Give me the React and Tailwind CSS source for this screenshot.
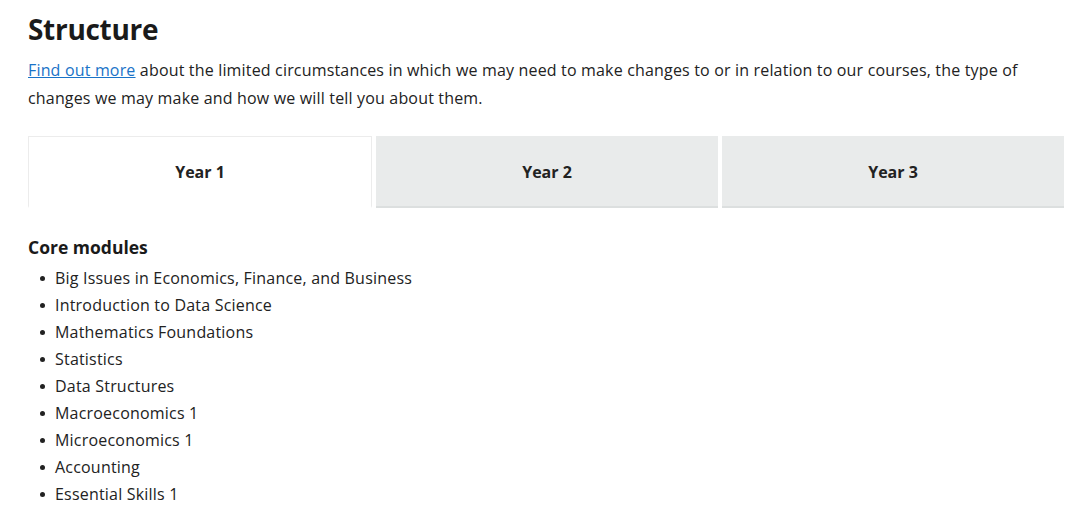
export default function App() {
  const items = [
    "Big Issues in Economics, Finance, and Business",
    "Introduction to Data Science",
    "Mathematics Foundations",
    "Statistics",
    "Data Structures",
    "Macroeconomics 1",
    "Microeconomics 1",
    "Accounting",
    "Essential Skills 1",
  ];
  return (
    <div className="w-[1080px] h-[521px] overflow-hidden bg-white text-[#222] px-[28px] pt-[10px]" style={{ fontFamily: '"Open Sans", sans-serif' }}>
      <h1 className="text-[28px] tracking-[-0.3px] font-bold leading-[38px] text-[#1a1a1a]">Structure</h1>
      <p className="mt-[8px] text-[16px] tracking-[0.17px] leading-[28px] whitespace-nowrap">
        <a href="#" className="text-[#1a73c8] underline">Find out more</a> about the limited circumstances in which we may need to make changes to or in relation to our courses, the type of
        <br />
        changes we may make and how we will tell you about them.
      </p>
      <div className="mt-[24px] flex gap-[4px] w-[1036px]">
        <div className="flex-1 h-[72px] bg-white border-t border-l border-r border-b-2 border-[#ececec] border-b-transparent flex items-center justify-center font-bold text-[16px]">Year 1</div>
        <div className="flex-1 h-[72px] bg-[#e9ebeb] border-t border-[#e9ebeb] border-b-2 border-b-[#dcdfdf] flex items-center justify-center font-bold text-[16px]">Year 2</div>
        <div className="flex-1 h-[72px] bg-[#e9ebeb] border-t border-[#e9ebeb] border-b-2 border-b-[#dcdfdf] flex items-center justify-center font-bold text-[16px]">Year 3</div>
      </div>
      <h2 className="mt-[26px] text-[17.5px] font-bold leading-[26px] text-[#1a1a1a]">Core modules</h2>
      <ul className="mt-[5px] pl-[12px]">
        {items.map((t) => (
          <li key={t} className="flex items-center text-[16px] tracking-[0.2px] leading-[27px]">
            <span className="w-[5px] h-[5px] rounded-full bg-[#222] mr-[10px]"></span>
            <span>{t}</span>
          </li>
        ))}
      </ul>
    </div>
  );
}
